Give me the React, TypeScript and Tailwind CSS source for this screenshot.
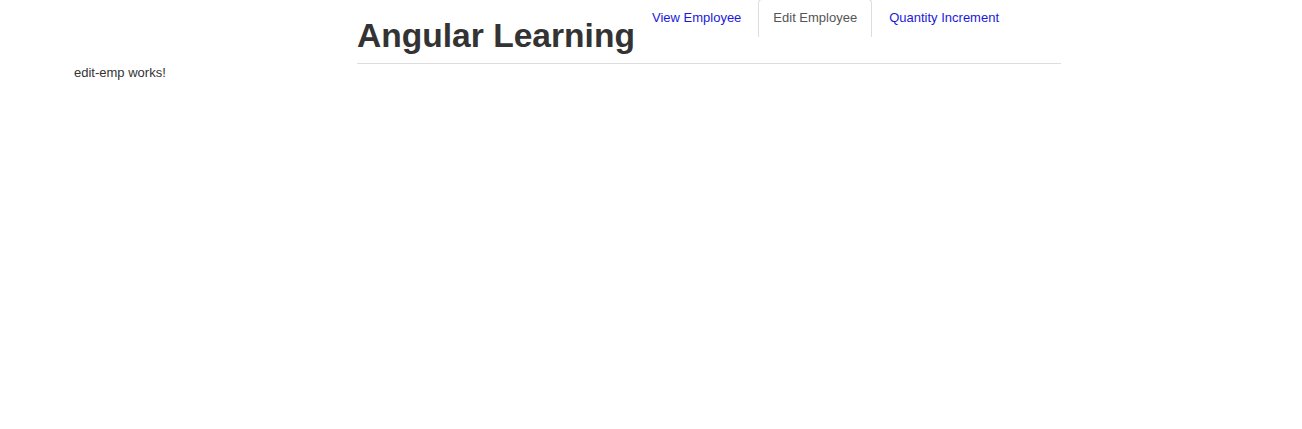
const tabs = [
  { label: "View Employee", active: false },
  { label: "Edit Employee", active: true },
  { label: "Quantity Increment", active: false },
];

export default function App() {
  return (
    <div
      className="min-h-[429px] bg-white text-[#333]"
      style={{ fontFamily: "'Liberation Sans', Arial, sans-serif" }}
    >
      {/* Header */}
      <div className="ml-[357px] w-[704px] border-b border-[#ddd]">
        <div className="flex items-start">
          <h1 className="mt-[14px] mb-[5px] text-[33.6px] leading-[44px] font-bold">
            Angular Learning
          </h1>
          <ul className="ml-[2px] flex">
            {tabs.map((t) => (
              <li key={t.label} className="mr-[2px]">
                <a
                  className={
                    t.active
                      ? "block h-[38px] px-[14px] pt-[9px] text-[13px] leading-[18px] text-[#555] border-x border-t border-b-0 border-[#ddd] rounded-t -mt-px"
                      : "block h-[38px] px-[15px] pt-[9px] text-[13px] leading-[18px] text-[#1a1ad8]"
                  }
                >
                  {t.label}
                </a>
              </li>
            ))}
          </ul>
        </div>
      </div>

      {/* Routed content */}
      <p className="ml-[74px] text-[13px] leading-[18px]">edit-emp works!</p>
    </div>
  );
}
